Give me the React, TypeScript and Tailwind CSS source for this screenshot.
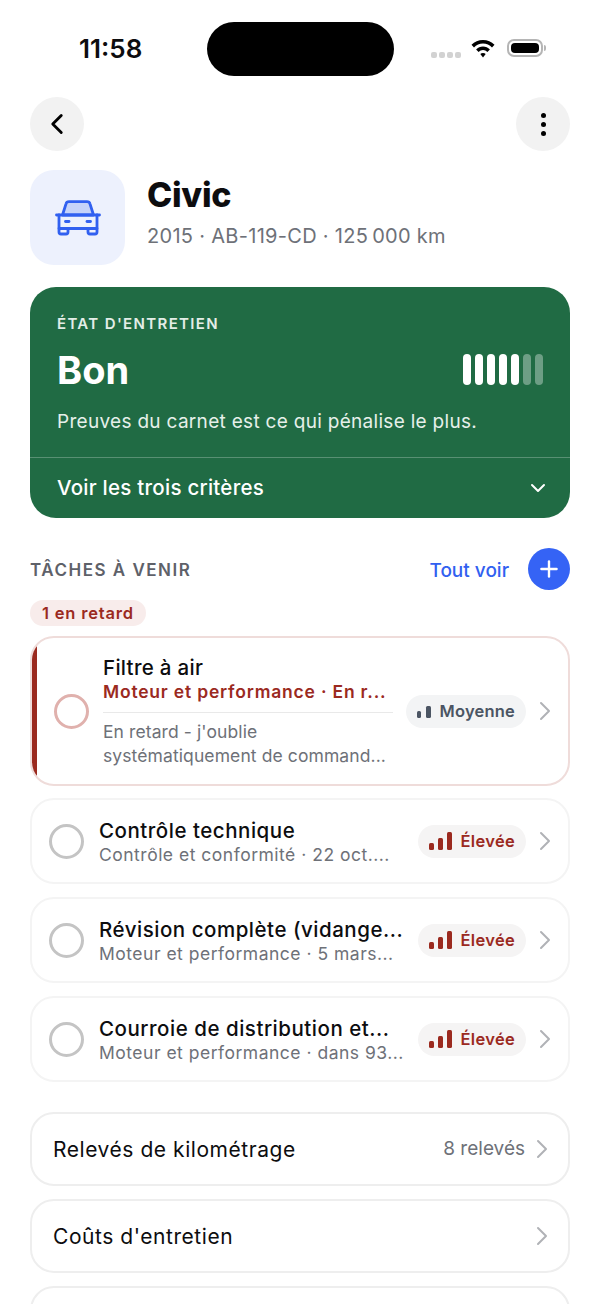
import { ChevronLeft, ChevronDown, Plus } from 'lucide-react';

const TASKS = [
  { title: 'Contrôle technique', sub: 'Contrôle et conformité · 22 oct....' },
  { title: 'Révision complète (vidange...', sub: 'Moteur et performance · 5 mars...' },
  { title: 'Courroie de distribution et...', sub: 'Moteur et performance · dans 93...' },
];

function Circle({ red }: { red?: boolean }) {
  return (
    <div
      className={`w-[35px] h-[35px] rounded-full border-[3px] shrink-0 ${
        red ? 'border-[#e0b1ad]' : 'border-[#c4c4c4]'
      }`}
    />
  );
}

function Chevron() {
  return (
    <svg width="12" height="20" viewBox="0 0 12 20" fill="none" stroke="#b0b2b6" strokeWidth="2" strokeLinecap="round" strokeLinejoin="round" className="shrink-0">
      <path d="M2 2 L10 10 L2 18" />
    </svg>
  );
}

function CarIcon() {
  return (
    <svg width="46" height="36" viewBox="0 0 46 36" fill="none" stroke="#3160f0" strokeWidth="2.800" strokeLinecap="round" strokeLinejoin="round">
      <path d="M7.500 15 L11 3.800 Q11.600 1.700 14 1.700 H32 Q34.400 1.700 35 3.800 L38.500 15 Z" fill="#c6d3f9" />
      <path d="M1.500 15 H44.500" />
      <path d="M4 15 V28.500 H42 V15" />
      <path d="M4 28.500 V32 Q4 34 6 34 H11 Q13 34 13 32 V29" />
      <path d="M42 28.500 V32 Q42 34 40 34 H35 Q33 34 33 32 V29" />
      <path d="M10.500 21.500 H14" />
      <path d="M32 21.500 H35.500" />
    </svg>
  );
}

export default function App() {
  return (
    <div className="w-[600px] h-[1304px] overflow-hidden bg-white text-[#0d0d0f] font-['Inter','Noto_Sans',sans-serif]">
      {/* Status bar */}
      <div className="relative h-[97px]">
        <span className="absolute left-[79px] top-[33px] text-[26px] leading-[32px] font-semibold">11:58</span>
        <div className="absolute left-[207px] top-[22px] w-[187px] h-[54px] rounded-full bg-black" />
        <div className="absolute left-[431px] top-[52px] flex gap-[2px]">
          {[0, 1, 2, 3].map((i) => (
            <div key={i} className="w-[6px] h-[6px] rounded-[2px] bg-[#d2d2d2]" />
          ))}
        </div>
        <svg className="absolute left-[471px] top-[38px]" width="24" height="23" viewBox="0 0 24 23" fill="#000">
          <path d="M12 2 C7.500 2 3.500 3.800 0.500 6.800 L3 9.400 C5.300 7 8.500 5.600 12 5.600 C15.500 5.600 18.700 7 21 9.400 L23.500 6.800 C20.500 3.800 16.500 2 12 2 Z" />
          <path d="M12 8.500 C9.300 8.500 6.900 9.600 5.100 11.400 L7.600 14 C8.800 12.900 10.300 12.100 12 12.100 C13.700 12.100 15.200 12.900 16.400 14 L18.900 11.400 C17.100 9.600 14.700 8.500 12 8.500 Z" />
          <path d="M12 15 C10.900 15 10 15.400 9.300 16.100 L12 19.500 L14.700 16.100 C14 15.400 13.100 15 12 15 Z" />
        </svg>
        <div className="absolute left-[507px] top-[39px] w-[36px] h-[18px] rounded-[7px] border-2 border-[#b5b5b5] p-[2px]">
          <div className="w-full h-full rounded-[4px] bg-black" />
        </div>
        <div className="absolute left-[544px] top-[45px] w-[2px] h-[6px] rounded-r bg-[#b5b5b5]" />
      </div>

      <div className="px-[30px]">
        {/* Nav */}
        <div className="flex justify-between">
          <div className="w-[54px] h-[54px] rounded-full bg-[#f2f2f2] flex items-center justify-center">
            <ChevronLeft size={34} strokeWidth={2} className="text-black" />
          </div>
          <div className="w-[54px] h-[54px] rounded-full bg-[#f2f2f2] flex flex-col items-center justify-center gap-[4px]">
            <div className="w-[5px] h-[5px] rounded-full bg-black" />
            <div className="w-[5px] h-[5px] rounded-full bg-black" />
            <div className="w-[5px] h-[5px] rounded-full bg-black" />
          </div>
        </div>

        {/* Vehicle */}
        <div className="flex items-center gap-[22px] mt-[19px]">
          <div className="w-[95px] h-[95px] rounded-[24px] bg-[#edf1fd] flex items-center justify-center">
            <CarIcon />
          </div>
          <div className="pb-[12px]">
            <div className="text-[34px] leading-[40px] font-extrabold tracking-[-0.3px]">Civic</div>
            <div className="mt-[8px] text-[20px] leading-[26px] text-[#6e7178] tracking-[0.3px]">2015 · AB-119-CD · 125{'\u202f'}000 km</div>
          </div>
        </div>

        {/* Health card */}
        <div className="mt-[22px] h-[231px] rounded-[26px] bg-[#206b44] text-white overflow-hidden">
          <div className="h-[170px] px-[27px] pt-[28px]">
            <div className="text-[15px] leading-[18px] font-semibold tracking-[1.35px] text-[#e3ede7]">ÉTAT D'ENTRETIEN</div>
            <div className="flex items-center justify-between mt-[14px]">
              <span className="text-[38px] leading-[46px] font-bold">Bon</span>
              <div className="flex gap-[4px] -mt-[2px]">
                {[1, 1, 1, 1, 1, 0, 0].map((on, i) => (
                  <div key={i} className={`w-[8px] h-[31px] rounded-full ${on ? 'bg-white' : 'bg-white/35'}`} />
                ))}
              </div>
            </div>
            <div className="mt-[16px] text-[19px] leading-[26px] text-[#e6f0ea] tracking-[0.3px]">Preuves du carnet est ce qui pénalise le plus.</div>
          </div>
          <div className="h-[61px] border-t border-white/25 pl-[27px] pr-[20px] flex items-center justify-between">
            <span className="text-[20.500px] font-medium tracking-[0.25px]">Voir les trois critères</span>
            <ChevronDown size={24} strokeWidth={2} />
          </div>
        </div>

        {/* Tasks header */}
        <div className="flex items-center justify-between mt-[30px] h-[42px]">
          <span className="pt-[4px] text-[17px] font-semibold tracking-[1.5px] text-[#5e6169]">TÂCHES À VENIR</span>
          <div className="flex items-center gap-[19px]">
            <span className="pt-[4px] text-[19px] font-medium text-[#3160f0]">Tout voir</span>
            <div className="w-[42px] h-[42px] rounded-full bg-[#3563f5] flex items-center justify-center">
              <Plus size={26} strokeWidth={2.2} className="text-white" />
            </div>
          </div>
        </div>
        <div className="mt-[10px] w-fit h-[26px] px-[12px] rounded-full bg-[#f8eceb] flex items-center text-[16.500px] font-semibold text-[#9b2a1f] tracking-[0.8px]">
          1 en retard
        </div>

        {/* Overdue task */}
        <div className="relative mt-[10px] h-[150px] rounded-[24px] border-2 border-[#efdcda] overflow-hidden flex items-center pl-[22px] pr-[17px]">
          <div className="absolute -left-[2px] -top-[2px] -bottom-[2px] w-[7px] bg-[#9b2a1f]" />
          <Circle red />
          <div className="ml-[14px] w-[290px] shrink-0">
            <div className="text-[20.500px] leading-[26px] font-medium tracking-[0.3px]">Filtre à air</div>
            <div className="text-[17.500px] leading-[22px] font-semibold text-[#9b2a1f] whitespace-nowrap tracking-[0.8px]">Moteur et performance · En r...</div>
            <div className="h-px bg-[#e9e9e9] mt-[9px] mb-[7px]" />
            <div className="text-[17.500px] leading-[24px] text-[#6e7178] whitespace-nowrap tracking-[0.1px]">
              En retard - j'oublie
              <br />
              systématiquement de command...
            </div>
          </div>
          <div className="ml-auto flex items-center gap-[13px]">
            <div className="h-[33px] px-[11px] rounded-full bg-[#f3f4f5] flex items-center gap-[9px] text-[16.500px] font-semibold text-[#4b5563] tracking-[0.2px]">
              <svg width="14" height="20" viewBox="0 0 14 20" className="shrink-0">
                <rect x="0" y="10" width="4" height="7" rx="1.5" fill="#4b5563" />
                <rect x="9" y="5" width="5" height="12" rx="1.5" fill="#4b5563" />
              </svg>
              Moyenne
            </div>
            <Chevron />
          </div>
        </div>

        {/* Other tasks */}
        <div className="mt-[12px] flex flex-col gap-[13px]">
          {TASKS.map((t) => (
            <div key={t.title} className="h-[86px] rounded-[24px] border-2 border-[#f4f4f4] flex items-center pl-[17px] pr-[17px]">
              <Circle />
              <div className="ml-[15px] w-[312px] shrink-0 whitespace-nowrap pt-[1px]">
                <div className="text-[20.500px] leading-[26px] font-medium tracking-[0.52px]">{t.title}</div>
                <div className="text-[17.500px] leading-[22px] text-[#6e7178] tracking-[0.5px]">{t.sub}</div>
              </div>
              <div className="ml-auto flex items-center gap-[13px]">
                <div className="h-[33px] px-[11px] rounded-full bg-[#f5f4f4] flex items-center gap-[9px] text-[16.500px] font-semibold text-[#9b2a1f] tracking-[0.3px]">
                  <svg width="23" height="20" viewBox="0 0 23 20" className="shrink-0">
                    <rect x="0" y="12" width="5" height="7" rx="1.5" fill="#9b2a1f" />
                    <rect x="9" y="7" width="5" height="12" rx="1.5" fill="#9b2a1f" />
                    <rect x="18" y="1" width="5" height="18" rx="1.5" fill="#9b2a1f" />
                  </svg>
                  Élevée
                </div>
                <Chevron />
              </div>
            </div>
          ))}
        </div>

        {/* Links */}
        <div className="mt-[30px] flex flex-col gap-[13px]">
          <div className="h-[74px] rounded-[24px] border-2 border-[#eeeeee] flex items-center justify-between pl-[21px] pr-[20px]">
            <span className="pt-[1px] text-[21px] font-normal tracking-[0.55px]">Relevés de kilométrage</span>
            <div className="flex items-center gap-[11px]">
              <span className="pt-[1px] text-[19px] text-[#6e7178]">8 relevés</span>
              <Chevron />
            </div>
          </div>
          <div className="h-[74px] rounded-[24px] border-2 border-[#eeeeee] flex items-center justify-between pl-[21px] pr-[20px]">
            <span className="pt-[1px] text-[21px] font-normal tracking-[0.55px]">Coûts d'entretien</span>
            <Chevron />
          </div>
          <div className="h-[74px] rounded-[24px] border-2 border-[#eeeeee]" />
        </div>
      </div>
    </div>
  );
}
